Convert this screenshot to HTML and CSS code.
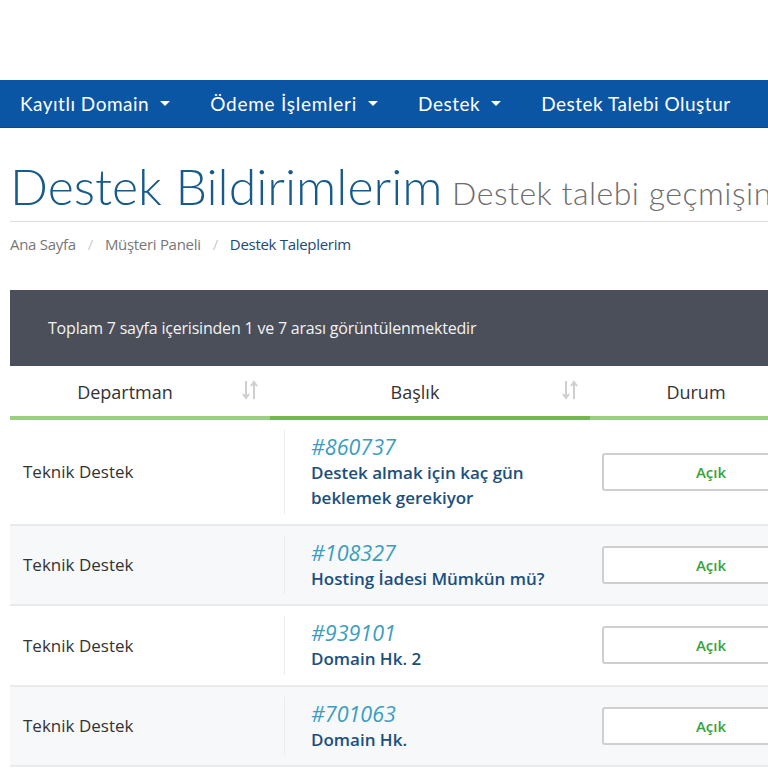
FILE: index.html
```html
<!DOCTYPE html>
<html lang="tr">
<head>
<meta charset="utf-8">
<link rel="stylesheet" href="styles.css">
</head>
<body>
<div class="page">
  <nav class="navbar">
    <a class="nav-item">Kayıtlı Domain<span class="caret"></span></a>
    <a class="nav-item wide">Ödeme İşlemleri<span class="caret"></span></a>
    <a class="nav-item">Destek<span class="caret"></span></a>
    <a class="nav-item">Destek Talebi Oluştur</a>
  </nav>
  <main class="content">
    <h1 class="title">Destek Bildirimlerim <small>Destek talebi geçmişiniz</small></h1>
    <ol class="breadcrumb">
      <li>Ana Sayfa</li>
      <li class="sep">/</li>
      <li>Müşteri Paneli</li>
      <li class="sep">/</li>
      <li class="active">Destek Taleplerim</li>
    </ol>
    <div class="panel-head">Toplam 7 sayfa içerisinden 1 ve 7 arası görüntülenmektedir</div>
    <div class="table">
      <div class="thead">
        <div class="th c1">Departman
          <svg class="sort" width="20" height="22" viewBox="0 0 20 22"><path d="M6 2v17M3 15l3 4 3-4M14 20V3M11 7l3-4 3 4" fill="none" stroke="#cfcfcf" stroke-width="2"/></svg>
        </div>
        <div class="th c2 sorted">Başlık
          <svg class="sort" width="20" height="22" viewBox="0 0 20 22"><path d="M6 2v17M3 15l3 4 3-4M14 20V3M11 7l3-4 3 4" fill="none" stroke="#cfcfcf" stroke-width="2"/></svg>
        </div>
        <div class="th c3">Durum</div>
      </div>
      <div class="tr">
        <div class="td c1">Teknik Destek</div>
        <div class="td c2"><div class="subj"><span class="num">#860737</span><span class="stitle">Destek almak için kaç gün beklemek gerekiyor</span></div></div>
        <div class="td c3"><span class="status">Açık</span></div>
      </div>
      <div class="tr alt">
        <div class="td c1">Teknik Destek</div>
        <div class="td c2"><div class="subj"><span class="num">#108327</span><span class="stitle">Hosting İadesi Mümkün mü?</span></div></div>
        <div class="td c3"><span class="status">Açık</span></div>
      </div>
      <div class="tr">
        <div class="td c1">Teknik Destek</div>
        <div class="td c2"><div class="subj"><span class="num">#939101</span><span class="stitle">Domain Hk. 2</span></div></div>
        <div class="td c3"><span class="status">Açık</span></div>
      </div>
      <div class="tr alt">
        <div class="td c1">Teknik Destek</div>
        <div class="td c2"><div class="subj"><span class="num">#701063</span><span class="stitle">Domain Hk.</span></div></div>
        <div class="td c3"><span class="status">Açık</span></div>
      </div>
    </div>
  </main>
</div>
</body>
</html>
```
FILE: styles.css
```css
html, body { margin: 0; padding: 0; background: #fff; }
body { overflow: hidden; width: 768px; height: 768px; font-family: "Open Sans", "Noto Sans", sans-serif; color: #333; }
.page { width: 1000px; padding-top: 80px; }
.navbar {
  height: 48px; background: #0b55a5; display: flex; align-items: center;
  padding-left: 20px; border-bottom: 1px solid #0a4a90; box-sizing: border-box;
}
.nav-item {
  color: #fff; font-family: "Lato", "Open Sans", sans-serif; font-size: 19px; letter-spacing: 0.5px;
  margin-right: 40px; display: flex; align-items: center; white-space: nowrap;
}
.nav-item.wide { letter-spacing: 0.75px; }
.caret {
  display: inline-block; width: 0; height: 0; margin-left: 11px;
  border-left: 5px solid transparent; border-right: 5px solid transparent; border-top: 5px solid #fff;
}
.content { padding-left: 10px; }
.title {
  margin: 0; padding: 32px 0 9px; font-family: "Lato", sans-serif; font-weight: 300;
  font-size: 50px; line-height: 52px; height: 52px; color: #175a8c; border-bottom: 1px solid #dcdcdc; white-space: nowrap;
}
.title small { font-size: 32px; line-height: 0; letter-spacing: 0.5px; color: #6d6d6d; font-weight: 300; margin-left: -4px; }
.breadcrumb {
  list-style: none; margin: 0; padding: 12px 0 0; display: flex; font-size: 15px; line-height: 20px;
  color: #777; height: 68px; box-sizing: border-box; letter-spacing: -0.3px;
}
.breadcrumb li { margin-right: 12px; }
.breadcrumb .sep { color: #ccc; }
.breadcrumb .active { color: #1d4a74; }
.panel-head {
  height: 76px; background: #4b4f5a; color: #f2f2f2; font-size: 16px;
  display: flex; align-items: center; padding-left: 38px; letter-spacing: -0.2px;
}
.table { width: 900px; }
.thead { display: flex; height: 54px; }
.th {
  display: flex; align-items: center; justify-content: center; position: relative;
  font-size: 18px; color: #333; border-bottom: 4px solid #9dd07e; box-sizing: border-box;
  padding-right: 30px; padding-top: 2px;
}
.th.sorted { border-bottom-color: #74b84c; }
.sort { position: absolute; right: 10px; top: 13px; }
.c1 { width: 260px; }
.c2 { width: 320px; }
.c3 { width: 242px; }
.tr { display: flex; border-bottom: 2px solid #e8eaec; }
.tr.alt { background: #f6f8fa; }
.td { display: flex; align-items: center; box-sizing: border-box; }
.td.c1 { padding-left: 13px; font-size: 17px; color: #333; }
.td.c2 { padding: 10px 0 10px 14px; }
.subj { border-left: 1px solid #ececec; padding: 4px 0 3.5px 26px; display: flex; flex-direction: column; }
.num { font-style: italic; font-size: 21.5px; color: #3c9dbf; line-height: 26px; }
.stitle { font-weight: 600; font-size: 17px; color: #1c4f7e; line-height: 25px; width: 270px; }
.td.c3 { padding-left: 12px; }
.status {
  display: flex; align-items: center; justify-content: center; flex: none; width: 218px; height: 38px;
  border: 2px solid #cfcfcf; border-radius: 3px; background: #fff; box-sizing: border-box;
  color: #3aa23a; font-weight: 600; font-size: 15px;
}
```
